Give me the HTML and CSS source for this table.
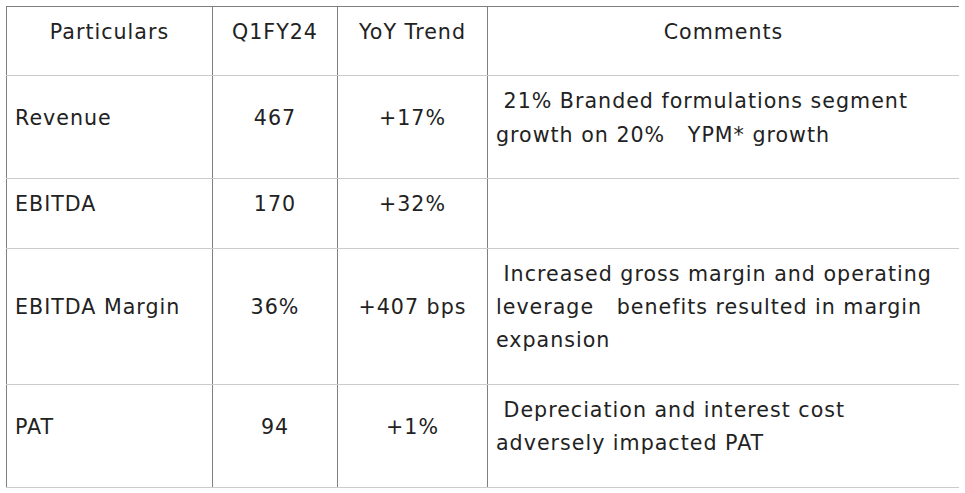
FILE: index.html
```html
<!DOCTYPE html>
<html>
<head>
<meta charset="utf-8">
<link rel="stylesheet" href="styles.css">
</head>
<body>
<table class="results">
  <colgroup>
    <col class="c-part">
    <col class="c-q">
    <col class="c-yoy">
    <col class="c-com">
  </colgroup>
  <thead>
    <tr>
      <th><p>Particulars</p></th>
      <th><p>Q1FY24</p></th>
      <th><p>YoY Trend</p></th>
      <th><p>Comments</p></th>
    </tr>
  </thead>
  <tbody>
    <tr>
      <td class="label"><p>Revenue</p></td>
      <td class="num"><p>467</p></td>
      <td class="num"><p>+17%</p></td>
      <td class="comment"><p>&nbsp;21% Branded formulations segment growth on 20% &nbsp; YPM* growth</p></td>
    </tr>
    <tr>
      <td class="label"><p>EBITDA</p></td>
      <td class="num"><p>170</p></td>
      <td class="num"><p>+32%</p></td>
      <td class="comment"></td>
    </tr>
    <tr>
      <td class="label"><p>EBITDA Margin</p></td>
      <td class="num"><p>36%</p></td>
      <td class="num"><p>+407 bps</p></td>
      <td class="comment"><p>&nbsp;Increased gross margin and operating leverage &nbsp; benefits resulted in margin expansion</p></td>
    </tr>
    <tr>
      <td class="label"><p>PAT</p></td>
      <td class="num"><p>94</p></td>
      <td class="num"><p>+1%</p></td>
      <td class="comment"><p>&nbsp;Depreciation and interest cost adversely impacted PAT</p></td>
    </tr>
  </tbody>
</table>
</body>
</html>
```

FILE: styles.css
```css
html, body {
  background: #ffffff;
}
body {
  margin: 6px;
  font-family: "DejaVu Sans", "Open Sans", sans-serif;
  font-size: 20.6px;
  letter-spacing: 1px;
  color: #222222;
}
.results {
  border-collapse: collapse;
  table-layout: fixed;
  width: 953px;
}
.c-part { width: 206px; }
.c-q { width: 125px; }
.c-yoy { width: 150px; }
.c-com { width: 472px; }

.results th,
.results td {
  border-left: 1px solid #7f7f7f;
  border-right: 1px solid #7f7f7f;
  border-top: 1px solid #cbcbcb;
  border-bottom: 1px solid #cbcbcb;
  padding: 9px 8px 7px 8px;
  vertical-align: middle;
  line-height: 33.4px;
}
.results thead th {
  border-top: 1px solid #7f7f7f;
  font-weight: normal;
  text-align: center;
}
.results p {
  margin: 0 0 19px 0;
}
.label { text-align: left; }
.num { text-align: center; }
.comment { text-align: left; }
```
